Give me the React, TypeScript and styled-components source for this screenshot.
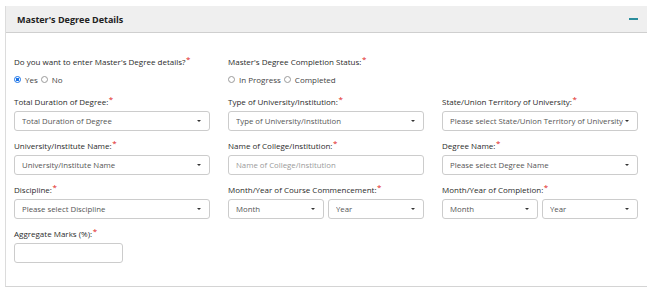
import React from "react";
import styled, { createGlobalStyle } from "styled-components";

const Global = createGlobalStyle`
  html, body { margin: 0; padding: 0; background: #fff; }
  body { font-family: "Open Sans", "Liberation Sans", sans-serif; }
  * { box-sizing: border-box; }
`;

const Page = styled.div`
  padding: 6px 9px 0 5px;
  width: 656px;
`;

const Panel = styled.section`
  border-left: 1px solid #dcdcdc;
  border-bottom: 1px solid #d4d4d4;
`;

const Header = styled.div`
  height: 27px;
  background: #efefef;
  border-bottom: 1px solid #cfcfcf;
  display: flex;
  align-items: center;
  justify-content: space-between;
  padding: 0 9px 0 11px;
`;

const Title = styled.h3`
  margin: 0;
  font-size: 9px;
  font-weight: 700;
  color: #222;
`;

const Minus = styled.span`
  display: block;
  width: 9px;
  height: 2px;
  background: #2a8d9c;
  margin-top: -1px;
`;

const Body = styled.div`
  padding: 23px 8px 14px 8px;
`;

const Grid = styled.div`
  display: grid;
  grid-template-columns: repeat(3, 196px);
  column-gap: 18px;
`;

const Field = styled.div`
  display: flex;
  flex-direction: column;
  margin-bottom: 9px;
`;

const Label = styled.label`
  font-size: 8px;
  line-height: 11px;
  height: 11px;
  color: #2b2b2b;
  margin-bottom: 4px;
  white-space: nowrap;
`;

const Req = styled.sup`
  color: #e02020;
  font-size: 8px;
  line-height: 0;
  position: relative;
  top: 1px;
  margin-left: 0.5px;
`;

const RadioRow = styled.div`
  display: flex;
  align-items: center;
  height: 13px;
  margin-top: 2px;
  margin-bottom: 1px;
  font-size: 8px;
  color: #444;
`;

const RadioDot = styled.span<{ $checked?: boolean }>`
  width: 7px;
  height: 7px;
  border-radius: 50%;
  flex: none;
  border: 1px solid ${(p) => (p.$checked ? "#1a73e8" : "#9a9a9a")};
  background: ${(p) => (p.$checked ? "radial-gradient(circle, #1a73e8 0 1.6px, #fff 2px)" : "#fff")};
  margin-right: 4px;
`;

const RadioText = styled.span`
  margin-right: 3px;
  line-height: 11px;
`;

const Box = styled.div<{ $width?: string }>`
  height: 20px;
  width: ${(p) => p.$width || "100%"};
  border: 1px solid #cccccc;
  border-radius: 3px;
  background: #fff;
  display: flex;
  align-items: center;
  padding: 0 5px 0 7px;
  font-size: 7.8px;
  color: #555;
  white-space: nowrap;
  overflow: hidden;
`;

const BoxText = styled.span<{ $placeholder?: boolean }>`
  flex: 1;
  overflow: hidden;
  color: ${(p) => (p.$placeholder ? "#9a9a9a" : "#555")};
`;

const Caret = styled.span`
  flex: none;
  width: 0;
  height: 0;
  border-left: 2px solid transparent;
  border-right: 2px solid transparent;
  border-top: 2.5px solid #333;
  margin-left: 2px;
  margin-right: 3px;
`;

const Pair = styled.div`
  display: grid;
  grid-template-columns: 1fr 1fr;
  column-gap: 4px;
`;

const Select = ({ text }: { text: string }) => (
  <Box>
    <BoxText>{text}</BoxText>
    <Caret />
  </Box>
);

const L = ({ children }: { children: React.ReactNode }) => (
  <Label>
    {children}
    <Req>*</Req>
  </Label>
);

export default function App() {
  return (
    <Page>
      <Global />
      <Panel>
        <Header>
          <Title>Master's Degree Details</Title>
          <Minus />
        </Header>
        <Body>
          <Grid>
            <Field>
              <L>Do you want to enter Master's Degree details?</L>
              <RadioRow>
                <RadioDot $checked />
                <RadioText>Yes</RadioText>
                <RadioDot />
                <RadioText>No</RadioText>
              </RadioRow>
            </Field>
            <Field>
              <L>Master's Degree Completion Status:</L>
              <RadioRow>
                <RadioDot />
                <RadioText>In Progress</RadioText>
                <RadioDot />
                <RadioText>Completed</RadioText>
              </RadioRow>
            </Field>
            <div />

            <Field>
              <L>Total Duration of Degree:</L>
              <Select text="Total Duration of Degree" />
            </Field>
            <Field>
              <L>Type of University/Institution:</L>
              <Select text="Type of University/Institution" />
            </Field>
            <Field>
              <L>State/Union Territory of University:</L>
              <Select text="Please select State/Union Territory of University" />
            </Field>

            <Field>
              <L>University/Institute Name:</L>
              <Select text="University/Institute Name" />
            </Field>
            <Field>
              <L>Name of College/Institution:</L>
              <Box>
                <BoxText $placeholder>Name of College/Institution</BoxText>
              </Box>
            </Field>
            <Field>
              <L>Degree Name:</L>
              <Select text="Please select Degree Name" />
            </Field>

            <Field>
              <L>Discipline:</L>
              <Select text="Please select Discipline" />
            </Field>
            <Field>
              <L>Month/Year of Course Commencement:</L>
              <Pair>
                <Select text="Month" />
                <Select text="Year" />
              </Pair>
            </Field>
            <Field>
              <L>Month/Year of Completion:</L>
              <Pair>
                <Select text="Month" />
                <Select text="Year" />
              </Pair>
            </Field>

            <Field>
              <L>Aggregate Marks (%):</L>
              <Box $width="109px" />
            </Field>
          </Grid>
        </Body>
      </Panel>
    </Page>
  );
}
